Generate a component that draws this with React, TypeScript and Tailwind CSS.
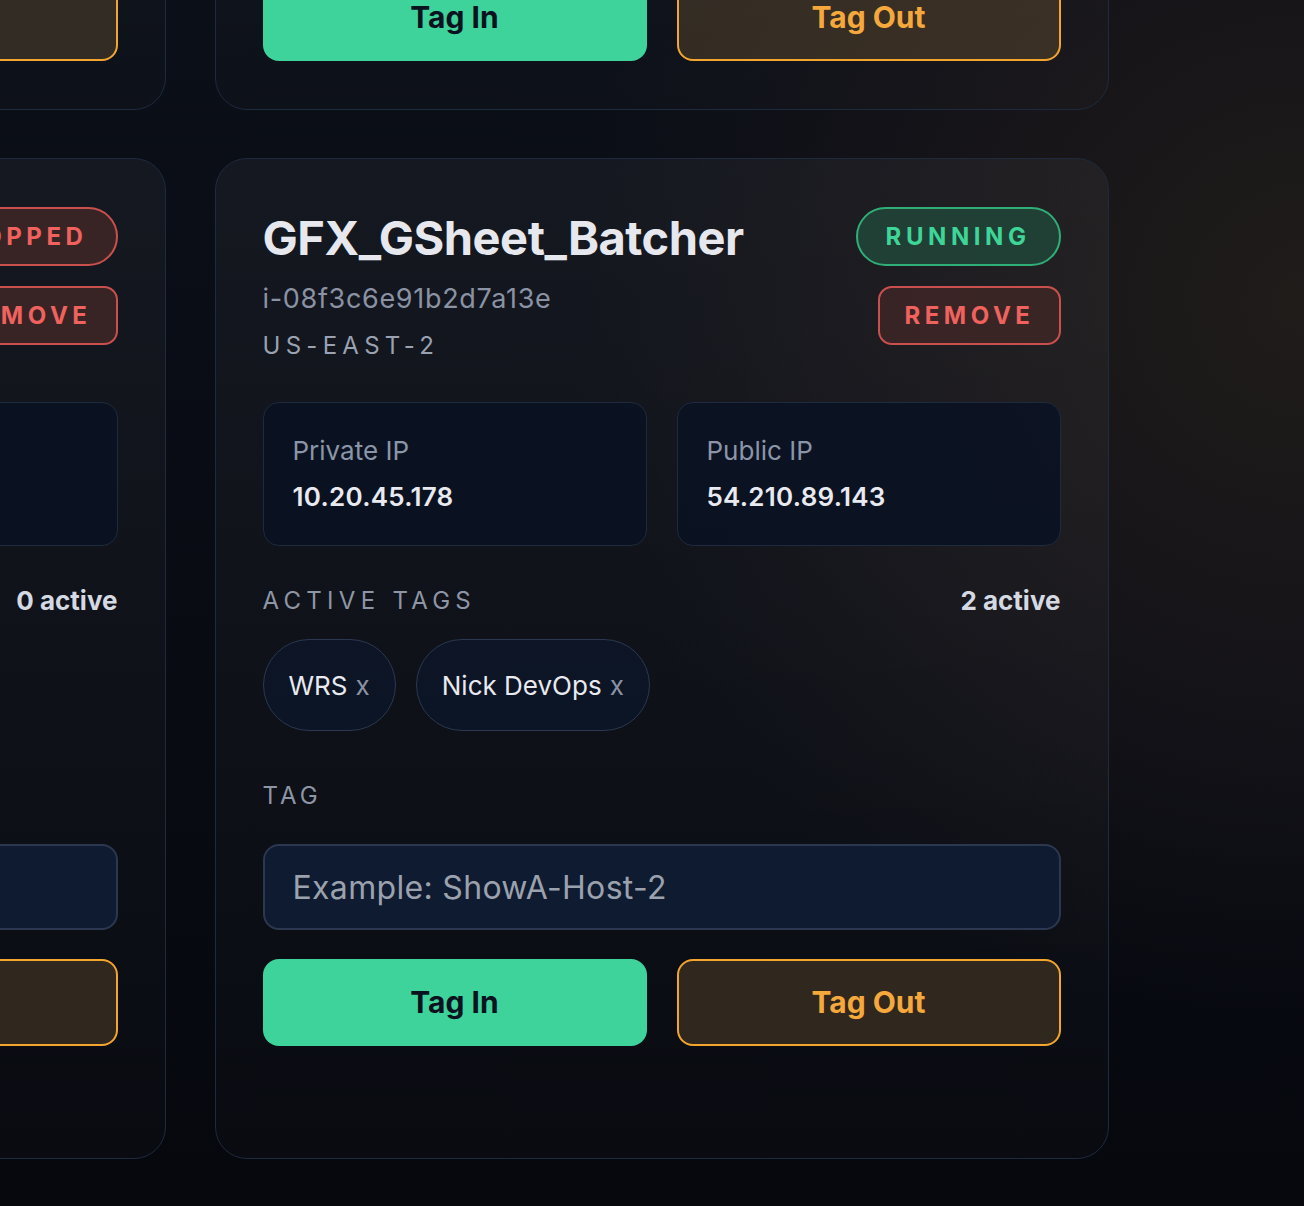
import React from 'react'

type Instance = {
  name: string
  id: string
  region: string
  status: 'running' | 'stopped'
  privateIp: string
  publicIp: string
  tags: string[]
}

const instances: Instance[] = [
  { name: 'GFX_Render_Node', id: 'i-0a7d21c94e5f3b860', region: 'US-EAST-2', status: 'running', privateIp: '10.20.44.12', publicIp: '3.141.22.87', tags: [] },
  { name: 'GFX_Playout_01', id: 'i-04b9e6a1c7d2f5e93', region: 'US-EAST-2', status: 'running', privateIp: '10.20.45.61', publicIp: '18.117.3.204', tags: ['WRS'] },
  { name: 'GFX_Archive_Sync', id: 'i-0c5e8b2f61a9d4c07', region: 'US-EAST-2', status: 'stopped', privateIp: '10.20.46.9', publicIp: '—', tags: [] },
  { name: 'GFX_GSheet_Batcher', id: 'i-08f3c6e91b2d7a13e', region: 'US-EAST-2', status: 'running', privateIp: '10.20.45.178', publicIp: '54.210.89.143', tags: ['WRS', 'Nick DevOps'] },
]

function StatusPill({ status }: { status: Instance['status'] }) {
  if (status === 'running') {
    return (
      <div className="h-[59px] px-[28px] flex items-center rounded-full border-2 border-[#2fae78] bg-[#214437]/90 text-[#3dd598] text-[24px] font-bold tracking-[0.19em]">
        RUNNING
      </div>
    )
  }
  return (
    <div className="h-[59px] px-[28px] flex items-center rounded-full border-2 border-[#c9504d] bg-[#3d2626]/90 text-[#f0625e] text-[24px] font-bold tracking-[0.19em]">
      STOPPED
    </div>
  )
}

function Card({ inst, top }: { inst: Instance; top?: boolean }) {
  return (
    <div
      className={`rounded-[32px] border-[1.5px] border-[#1e2a3e] bg-[linear-gradient(180deg,rgba(255,255,255,0.045),rgba(255,255,255,0.012))] pl-[46.5px] pr-[47.5px] pt-12 flex flex-col ${
        top ? 'h-[935px] justify-end pb-12' : 'h-[1001px]'
      }`}
    >
      <div className="flex items-start justify-between">
        <div className="flex flex-col">
          <div className="text-[47px] leading-[62px] font-bold tracking-[-0.01em] text-[#e6e8ee]">{inst.name}</div>
          <div className="mt-[12px] text-[27px] leading-[36px] tracking-[0.025em] text-[#8a92a3]">{inst.id}</div>
          <div className="mt-[13px] text-[24px] leading-[32px] tracking-[0.22em] text-[#9aa2b2]">{inst.region}</div>
        </div>
        <div className="flex flex-col items-end gap-5">
          <StatusPill status={inst.status} />
          <button className="h-[59px] px-[24px] rounded-[14px] border-2 border-[#c9504d] bg-[#3d2626]/90 text-[#f0625e] text-[24px] font-bold tracking-[0.19em]">
            REMOVE
          </button>
        </div>
      </div>

      <div className="mt-10 grid grid-cols-2 gap-[30px]">
        <IpBox label="Private IP" value={inst.privateIp} />
        <IpBox label="Public IP" value={inst.publicIp} />
      </div>

      <div className="mt-[39px] flex items-center justify-between leading-[32px]">
        <span className="text-[24px] tracking-[0.22em] text-[#8e96a6]">ACTIVE TAGS</span>
        <span className="text-[26px] font-bold text-[#d5d9e2]">{inst.tags.length} active</span>
      </div>

      <div className="mt-[22px] h-[92px] flex gap-5">
        {inst.tags.map((t) => (
          <div
            key={t}
            className="h-[92px] px-[25px] flex items-center gap-2 rounded-full border-[1.5px] border-[#2b3850] bg-[#0d1729]/80 text-[26px]"
          >
            <span className="text-[#e8eaf0]">{t}</span>
            <span className="text-[#8a92a3]">x</span>
          </div>
        ))}
      </div>

      <div className="mt-[49px] text-[24px] leading-[32px] tracking-[0.17em] text-[#8e96a6]">TAG</div>

      <input
        className="mt-8 h-[86px] rounded-[16px] border-2 border-[#2b3850] bg-[#0f1b30] px-[28px] text-[32px] tracking-[0.01em] text-[#e8eaf0] placeholder:text-[#9ba1ad] outline-none"
        placeholder="Example: ShowA-Host-2"
      />

      <div className="mt-[29px] grid grid-cols-2 gap-[30px]">
        <button className="h-[87px] rounded-[16px] bg-[#3dd39b] text-[#0a1220] text-[30px] font-bold">Tag In</button>
        <button className="h-[87px] rounded-[16px] border-2 border-[#f4a52e] bg-[#f5b45a]/[0.16] text-[#f5a83c] text-[30px] font-bold">
          Tag Out
        </button>
      </div>
    </div>
  )
}

function IpBox({ label, value }: { label: string; value: string }) {
  return (
    <div className="rounded-[16px] border-[1.5px] border-[#1e2a3d] bg-[#0a1222]/90 px-[29px] py-[30px] flex flex-col gap-[10px]">
      <span className="text-[26px] leading-[36px] text-[#8b95a8]">{label}</span>
      <span className="text-[26px] leading-[36px] font-semibold tracking-[0.01em] text-[#e8eaf0]">{value}</span>
    </div>
  )
}

export default function App() {
  return (
    <div className="w-[1304px] h-[1206px] overflow-hidden font-['Inter',sans-serif] bg-[radial-gradient(ellipse_70%_75%_at_100%_25%,#201c1a_0%,#141318_45%,transparent_80%),linear-gradient(180deg,#0b0f18_0%,#06080e_100%)]">
      <div className="ml-[-728px] mt-[-825px] grid grid-cols-[894px_894px] gap-x-[49px] gap-y-12">
        <Card inst={instances[0]} top />
        <Card inst={instances[1]} top />
        <Card inst={instances[2]} />
        <Card inst={instances[3]} />
      </div>
    </div>
  )
}
